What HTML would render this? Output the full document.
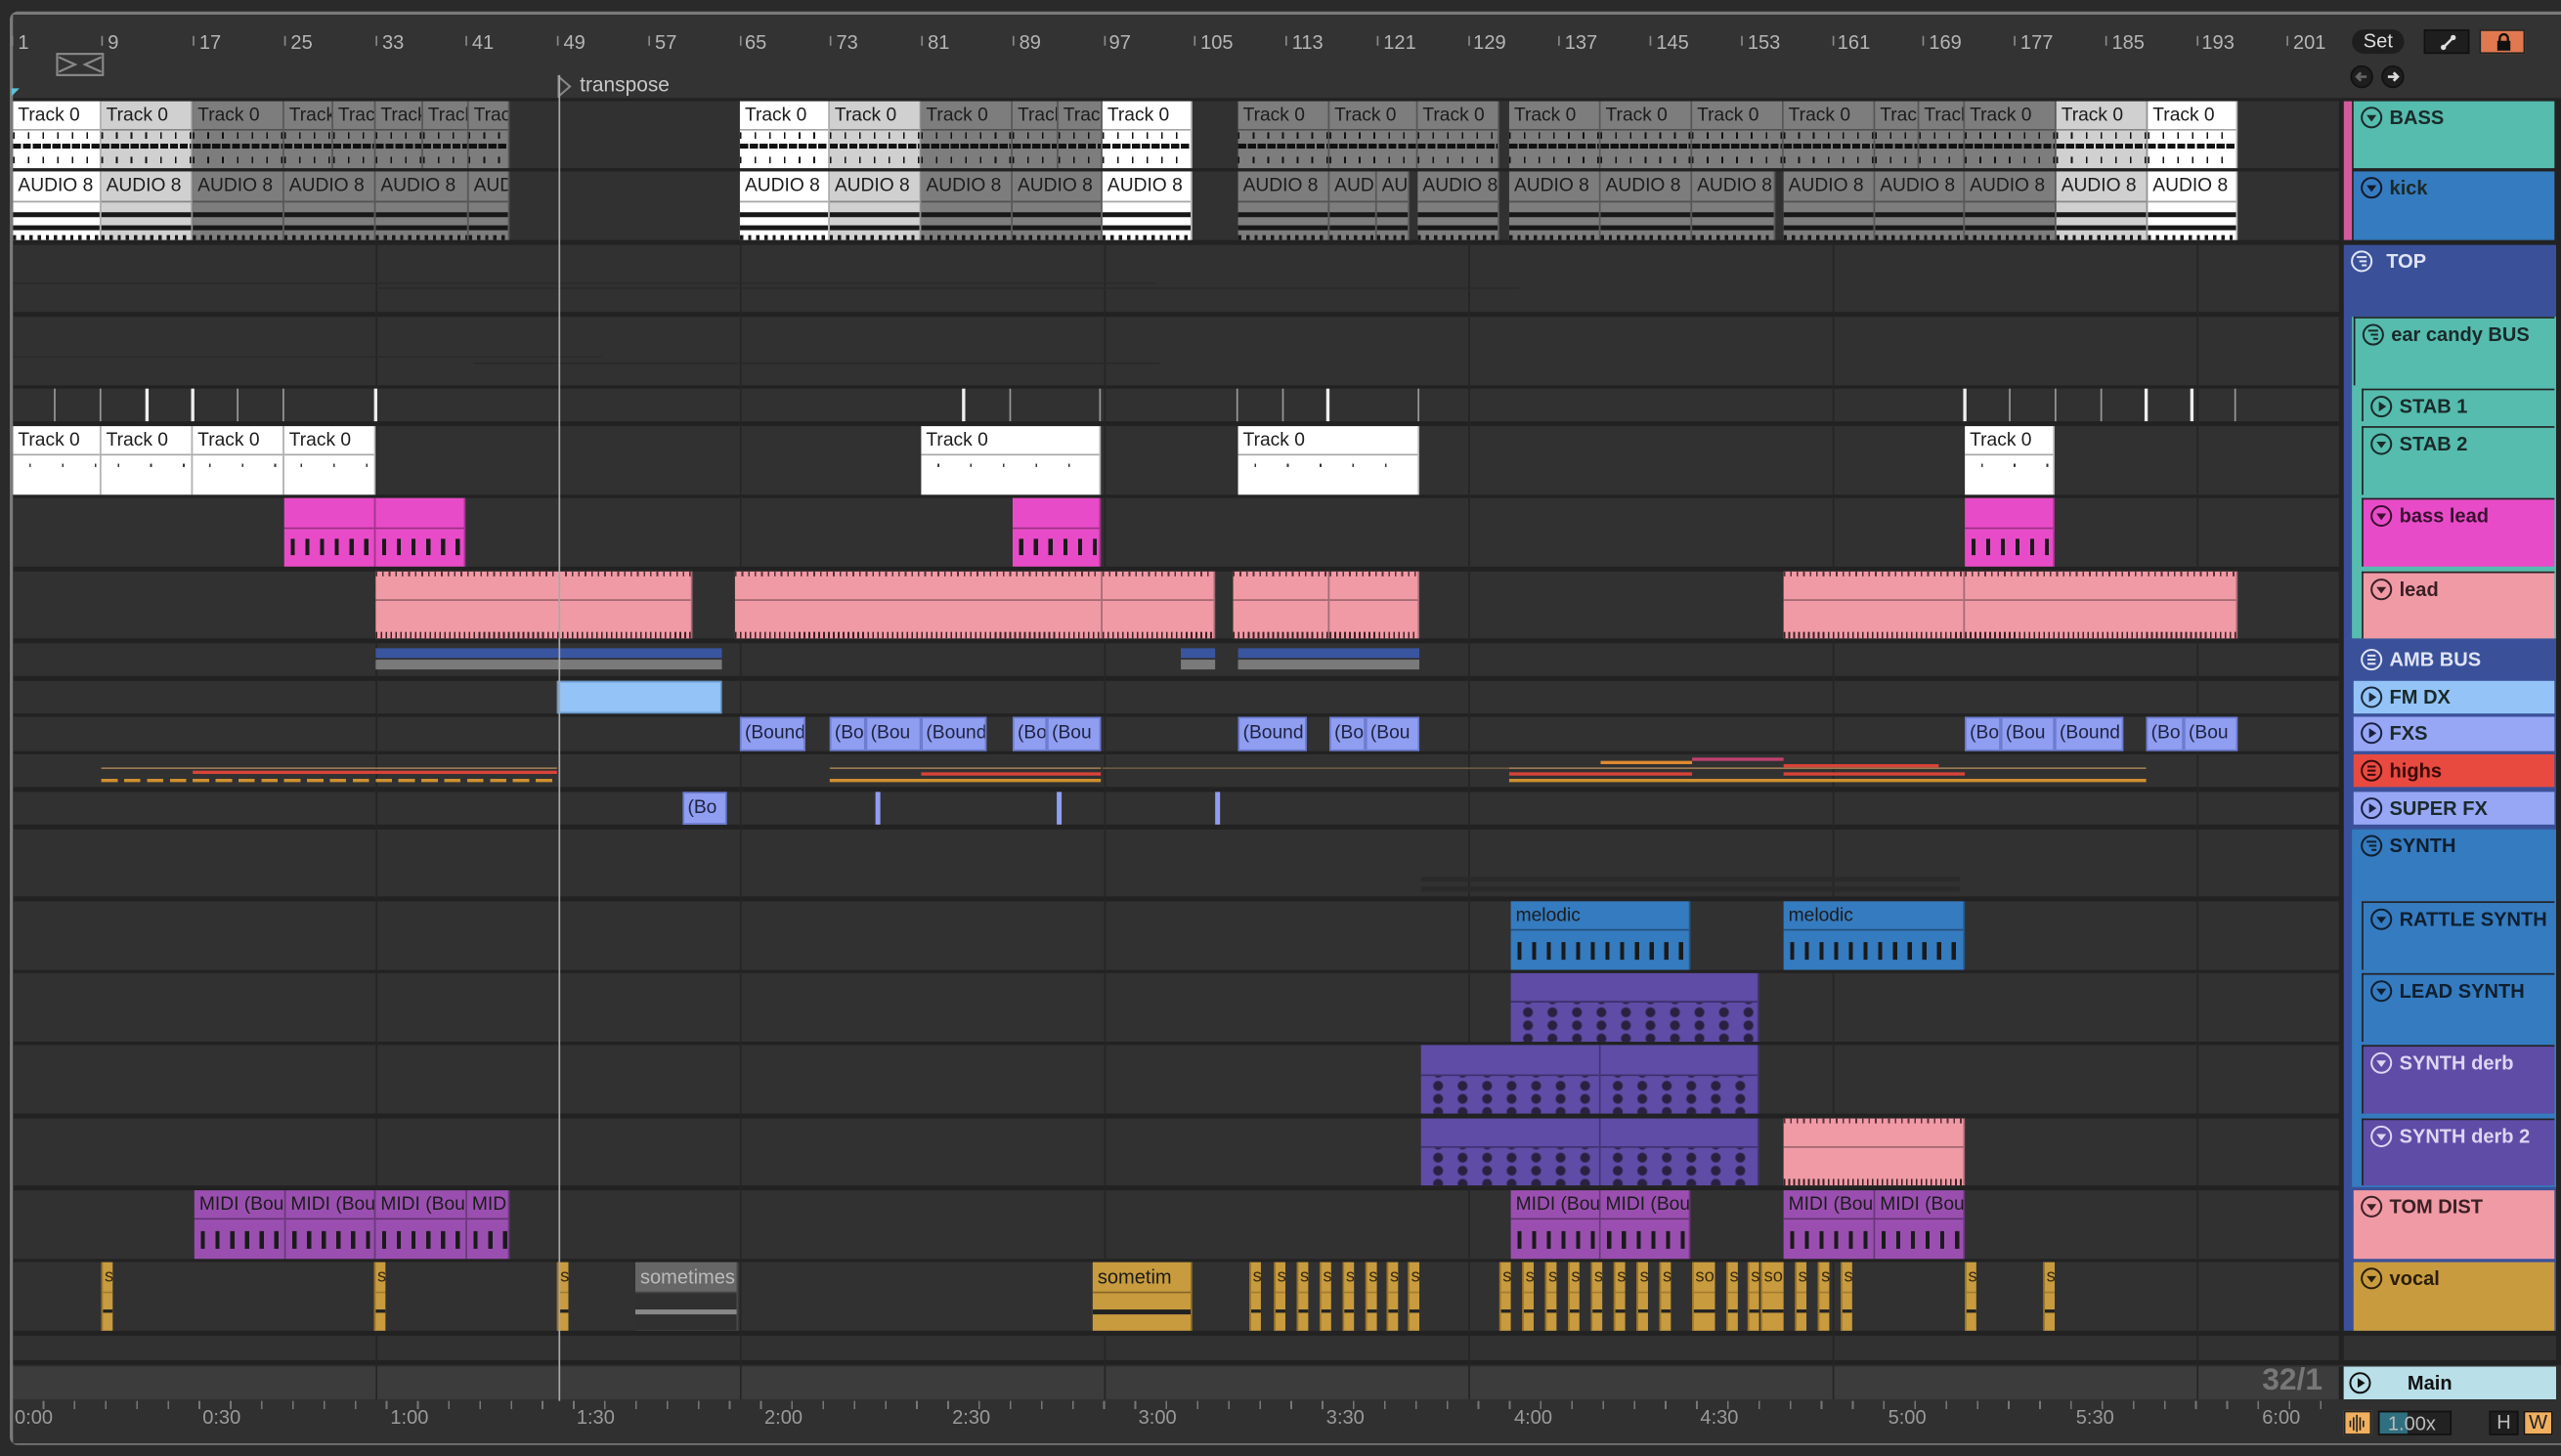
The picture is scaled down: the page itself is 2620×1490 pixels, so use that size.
<!DOCTYPE html>
<html><head><meta charset="utf-8"><style>
*{margin:0;padding:0;box-sizing:border-box}
html,body{width:2620px;height:1490px;overflow:hidden;background:#2a2a2a}
#s{position:absolute;left:0;top:0;width:1568px;height:892px;transform:scale(1.67092);transform-origin:0 0;font-family:"Liberation Sans",sans-serif}
.a{position:absolute}
.ln{position:absolute;left:8px;width:1424px;background:#313131}
.k{position:absolute;top:0;height:100%;overflow:hidden;border-right:1px solid rgba(0,0,0,.3)}
.k b{display:block;height:44%;font-weight:400;font-size:11.5px;line-height:19px;padding-left:3px;white-space:nowrap;border-bottom:1px solid rgba(0,0,0,.35);color:#1c1c1c;overflow:hidden}
.k s{display:block;height:56%;text-decoration:none}
.w{background:#fff}.lg{background:#d0d0d0}.g{background:#7d7d7d}
.dt s{background:repeating-linear-gradient(90deg,#111 0 5px,transparent 5px 6px) 0 40%/100% 3px no-repeat,repeating-linear-gradient(90deg,#111 0 1px,transparent 1px 9px) 0 85%/100% 4px no-repeat,repeating-linear-gradient(90deg,#111 0 1px,transparent 1px 9px) 0 5%/100% 4px no-repeat}
.au s{background:linear-gradient(#181818,#181818) 0 30%/100% 3px no-repeat,linear-gradient(#181818,#181818) 0 70%/100% 3px no-repeat,repeating-linear-gradient(90deg,#181818 0 2px,transparent 2px 5px) 0 100%/100% 3px no-repeat}
.mb s{background:repeating-linear-gradient(90deg,transparent 0 4px,#1a1a1a 4px 6.5px,transparent 6.5px 9px) 0 50%/100% 45% no-repeat}
.pd s{background:radial-gradient(circle,#2a2040 30%,transparent 40%) 3px 2px/15px 8px}
.pk b{background:repeating-linear-gradient(90deg,#5a3038 0 1px,transparent 1px 4px) 0 0/100% 3px no-repeat}
.pk s{background:repeating-linear-gradient(90deg,#3a2024 0 1px,transparent 1px 3px) 0 100%/100% 4px no-repeat}
.sd s{background:repeating-linear-gradient(90deg,#333 0 1px,transparent 1px 20px) 10px 20%/100% 2px no-repeat}
.fx{position:absolute;top:0;height:100%;background:#8f9ef0;border:1px solid #6c7bd0;font-size:11.5px;line-height:19px;padding-left:2px;white-space:nowrap;overflow:hidden;color:#1e2240}
.v{position:absolute;top:0;height:100%;width:7px;background:#c89b3e;border-left:1px solid #9a7428;overflow:hidden}
.v b{display:block;height:44%;font-weight:400;font-size:11px;line-height:19px;color:#3a2a10;padding-left:1px;border-bottom:1px solid rgba(0,0,0,.2)}
.v s{display:block;height:56%;background:linear-gradient(#222,#222) 0 50%/100% 2px no-repeat}
.h{position:absolute;left:1441px;width:123px;font-weight:700;font-size:12px;line-height:20px;color:#1a2a2a;padding-left:22px;white-space:nowrap}
.h svg{position:absolute;left:4px;top:3px}
.n{border-left:1.5px solid #222;border-top:1.5px solid #222}
.gl{position:absolute;top:60px;height:797px;width:1px;background:#252525}
.rn{position:absolute;top:19px;font-size:12px;color:#b5b5b5}
.rt{position:absolute;top:22px;width:1px;height:6px;background:#888}
.tl{position:absolute;top:861px;font-size:12px;color:#9a9a9a}
.hl{position:absolute;height:1px}
</style></head><body><div id="s">
<div class="a" style="left:6px;top:7px;width:1570px;height:878px;border:2px solid #7a7a7a;border-radius:5px;background:#303030"></div>
<div class="a" style="left:8px;top:9px;width:1427px;height:51px;background:#333"></div>
<div class="a" style="left:1435px;top:9px;width:133px;height:51px;background:#333"></div>
<div class="a" style="left:8px;top:60px;width:1560px;height:776px;background:#222"></div>
<div class="ln" style="top:62.2px;height:40.7px"></div>
<div class="ln" style="top:105.3px;height:41.9px"></div>
<div class="ln" style="top:149.6px;height:41.9px"></div>
<div class="ln" style="top:193.9px;height:41.9px"></div>
<div class="ln" style="top:238.2px;height:20.3px"></div>
<div class="ln" style="top:260.9px;height:41.9px"></div>
<div class="ln" style="top:305.2px;height:41.9px"></div>
<div class="ln" style="top:349.5px;height:41.9px"></div>
<div class="ln" style="top:393.8px;height:20.3px"></div>
<div class="ln" style="top:416.5px;height:20.3px"></div>
<div class="ln" style="top:439.3px;height:20.3px"></div>
<div class="ln" style="top:462px;height:20.3px"></div>
<div class="ln" style="top:484.7px;height:20.3px"></div>
<div class="ln" style="top:507.5px;height:41.9px"></div>
<div class="ln" style="top:551.8px;height:41.9px"></div>
<div class="ln" style="top:596px;height:41.9px"></div>
<div class="ln" style="top:640.3px;height:41.9px"></div>
<div class="ln" style="top:684.6px;height:41.9px"></div>
<div class="ln" style="top:728.9px;height:41.9px"></div>
<div class="ln" style="top:773.2px;height:41.9px"></div>
<div class="ln" style="top:817.5px;height:15.6px"></div>
<div class="a" style="left:8px;top:836.6px;width:1424px;height:20.3px;background:#3c3c3c"></div>
<div class="a" style="left:1432px;top:836.6px;width:3px;height:20.3px;background:#222"></div>
<div class="a" style="left:1385px;top:835px;font-size:19px;font-weight:700;color:#777">32/1</div>
<div class="a" style="left:8px;top:857px;width:1560px;height:27px;background:#303030"></div>
<div class="gl" style="left:229.6px"></div><div class="gl" style="left:452.6px"></div><div class="gl" style="left:675.6px"></div><div class="gl" style="left:898.6px"></div><div class="gl" style="left:1121.6px"></div><div class="gl" style="left:1344.6px"></div>
<div class="hl" style="left:8px;top:173px;width:700px;background:#2a2a2a"></div>
<div class="hl" style="left:230px;top:176px;width:700px;background:#2a2a2a"></div>
<div class="hl" style="left:8px;top:218px;width:360px;background:#2a2a2a"></div>
<div class="hl" style="left:290px;top:222px;width:420px;background:#2a2a2a"></div>
<div class="hl" style="left:870px;top:537px;width:330px;height:3px;background:#2a2a2a"></div>
<div class="hl" style="left:870px;top:543px;width:330px;height:3px;background:#2a2a2a"></div>
<div class="rt" style="left:7px"></div><div class="rn" style="left:11px">1</div>
<div class="rt" style="left:62.4px"></div><div class="rn" style="left:66px">9</div>
<div class="rt" style="left:118.1px"></div><div class="rn" style="left:122px">17</div>
<div class="rt" style="left:173.9px"></div><div class="rn" style="left:178px">25</div>
<div class="rt" style="left:229.6px"></div><div class="rn" style="left:234px">33</div>
<div class="rt" style="left:285.4px"></div><div class="rn" style="left:289px">41</div>
<div class="rt" style="left:341.1px"></div><div class="rn" style="left:345px">49</div>
<div class="rt" style="left:396.9px"></div><div class="rn" style="left:401px">57</div>
<div class="rt" style="left:452.6px"></div><div class="rn" style="left:456px">65</div>
<div class="rt" style="left:508.4px"></div><div class="rn" style="left:512px">73</div>
<div class="rt" style="left:564.1px"></div><div class="rn" style="left:568px">81</div>
<div class="rt" style="left:619.9px"></div><div class="rn" style="left:624px">89</div>
<div class="rt" style="left:675.6px"></div><div class="rn" style="left:679px">97</div>
<div class="rt" style="left:731.4px"></div><div class="rn" style="left:735px">105</div>
<div class="rt" style="left:787.1px"></div><div class="rn" style="left:791px">113</div>
<div class="rt" style="left:842.9px"></div><div class="rn" style="left:847px">121</div>
<div class="rt" style="left:898.6px"></div><div class="rn" style="left:902px">129</div>
<div class="rt" style="left:954.4px"></div><div class="rn" style="left:958px">137</div>
<div class="rt" style="left:1010.1px"></div><div class="rn" style="left:1014px">145</div>
<div class="rt" style="left:1065.9px"></div><div class="rn" style="left:1070px">153</div>
<div class="rt" style="left:1121.6px"></div><div class="rn" style="left:1125px">161</div>
<div class="rt" style="left:1177.4px"></div><div class="rn" style="left:1181px">169</div>
<div class="rt" style="left:1233.1px"></div><div class="rn" style="left:1237px">177</div>
<div class="rt" style="left:1288.9px"></div><div class="rn" style="left:1293px">185</div>
<div class="rt" style="left:1344.6px"></div><div class="rn" style="left:1348px">193</div>
<div class="rt" style="left:1400.4px"></div><div class="rn" style="left:1404px">201</div>
<svg class="a" style="left:34px;top:32px" width="30" height="15"><rect x="1" y="1" width="28" height="13" fill="none" stroke="#888" stroke-width="1.3"/><path d="M2 3 L12 7.5 L2 12 M28 3 L18 7.5 L28 12" fill="none" stroke="#888" stroke-width="1.3"/></svg>
<svg class="a" style="left:7px;top:54px" width="6" height="6"><path d="M0 0H5L0 5Z" fill="#5ac4d8"/></svg>
<svg class="a" style="left:341px;top:46px" width="10" height="14"><path d="M1 1 L8 7 L1 13Z" fill="none" stroke="#888" stroke-width="1.2"/></svg>
<div class="a" style="left:355px;top:45px;font-size:12.5px;color:#c8c8c8">transpose</div>
<div class="a" style="left:0;top:62.2px;height:40.7px;width:1432px">
<div class="k dt w" style="left:8px;width:54px"><b>Track 0</b><s></s></div>
<div class="k dt lg" style="left:62px;width:56px"><b>Track 0</b><s></s></div>
<div class="k dt g" style="left:118px;width:56px"><b>Track 0</b><s></s></div>
<div class="k dt g" style="left:174px;width:30px"><b>Track 0</b><s></s></div>
<div class="k dt g" style="left:204px;width:26px"><b>Track 0</b><s></s></div>
<div class="k dt g" style="left:230px;width:29px"><b>Track 0</b><s></s></div>
<div class="k dt g" style="left:259px;width:28px"><b>Track 0</b><s></s></div>
<div class="k dt g" style="left:287px;width:25px"><b>Track 0</b><s></s></div>
<div class="k dt w" style="left:453px;width:55px"><b>Track 0</b><s></s></div>
<div class="k dt lg" style="left:508px;width:56px"><b>Track 0</b><s></s></div>
<div class="k dt g" style="left:564px;width:56px"><b>Track 0</b><s></s></div>
<div class="k dt g" style="left:620px;width:28px"><b>Track 0</b><s></s></div>
<div class="k dt g" style="left:648px;width:27px"><b>Track 0</b><s></s></div>
<div class="k dt w" style="left:675px;width:55px"><b>Track 0</b><s></s></div>
<div class="k dt g" style="left:758px;width:56px"><b>Track 0</b><s></s></div>
<div class="k dt g" style="left:814px;width:54px"><b>Track 0</b><s></s></div>
<div class="k dt g" style="left:868px;width:50px"><b>Track 0</b><s></s></div>
<div class="k dt g" style="left:924px;width:56px"><b>Track 0</b><s></s></div>
<div class="k dt g" style="left:980px;width:56px"><b>Track 0</b><s></s></div>
<div class="k dt g" style="left:1036px;width:56px"><b>Track 0</b><s></s></div>
<div class="k dt g" style="left:1092px;width:56px"><b>Track 0</b><s></s></div>
<div class="k dt g" style="left:1148px;width:27px"><b>Track 0</b><s></s></div>
<div class="k dt g" style="left:1175px;width:28px"><b>Track 0</b><s></s></div>
<div class="k dt g" style="left:1203px;width:56px"><b>Track 0</b><s></s></div>
<div class="k dt lg" style="left:1259px;width:56px"><b>Track 0</b><s></s></div>
<div class="k dt w" style="left:1315px;width:55px"><b>Track 0</b><s></s></div>
</div>
<div class="a" style="left:0;top:105.3px;height:41.9px;width:1432px">
<div class="k au w" style="left:8px;width:54px"><b>AUDIO 8</b><s></s></div>
<div class="k au lg" style="left:62px;width:56px"><b>AUDIO 8</b><s></s></div>
<div class="k au g" style="left:118px;width:56px"><b>AUDIO 8</b><s></s></div>
<div class="k au g" style="left:174px;width:56px"><b>AUDIO 8</b><s></s></div>
<div class="k au g" style="left:230px;width:57px"><b>AUDIO 8</b><s></s></div>
<div class="k au g" style="left:287px;width:25px"><b>AUDIO 8</b><s></s></div>
<div class="k au w" style="left:453px;width:55px"><b>AUDIO 8</b><s></s></div>
<div class="k au lg" style="left:508px;width:56px"><b>AUDIO 8</b><s></s></div>
<div class="k au g" style="left:564px;width:56px"><b>AUDIO 8</b><s></s></div>
<div class="k au g" style="left:620px;width:55px"><b>AUDIO 8</b><s></s></div>
<div class="k au w" style="left:675px;width:55px"><b>AUDIO 8</b><s></s></div>
<div class="k au g" style="left:758px;width:56px"><b>AUDIO 8</b><s></s></div>
<div class="k au g" style="left:814px;width:29px"><b>AUDIO 8</b><s></s></div>
<div class="k au g" style="left:843px;width:20px"><b>AUDIO 8</b><s></s></div>
<div class="k au g" style="left:868px;width:50px"><b>AUDIO 8</b><s></s></div>
<div class="k au g" style="left:924px;width:56px"><b>AUDIO 8</b><s></s></div>
<div class="k au g" style="left:980px;width:56px"><b>AUDIO 8</b><s></s></div>
<div class="k au g" style="left:1036px;width:51px"><b>AUDIO 8</b><s></s></div>
<div class="k au g" style="left:1092px;width:56px"><b>AUDIO 8</b><s></s></div>
<div class="k au g" style="left:1148px;width:55px"><b>AUDIO 8</b><s></s></div>
<div class="k au g" style="left:1203px;width:56px"><b>AUDIO 8</b><s></s></div>
<div class="k au lg" style="left:1259px;width:56px"><b>AUDIO 8</b><s></s></div>
<div class="k au w" style="left:1315px;width:55px"><b>AUDIO 8</b><s></s></div>
</div>
<div class="a" style="left:0;top:238.2px;height:20.3px;width:1432px">
<div class="a" style="left:33px;top:0;width:1px;height:100%;background:#999"></div>
<div class="a" style="left:61px;top:0;width:1px;height:100%;background:#999"></div>
<div class="a" style="left:89px;top:0;width:2px;height:100%;background:#eee"></div>
<div class="a" style="left:117px;top:0;width:2px;height:100%;background:#eee"></div>
<div class="a" style="left:145px;top:0;width:1px;height:100%;background:#999"></div>
<div class="a" style="left:173px;top:0;width:1px;height:100%;background:#999"></div>
<div class="a" style="left:229px;top:0;width:2px;height:100%;background:#eee"></div>
<div class="a" style="left:589px;top:0;width:2px;height:100%;background:#eee"></div>
<div class="a" style="left:618px;top:0;width:1px;height:100%;background:#999"></div>
<div class="a" style="left:673px;top:0;width:1px;height:100%;background:#999"></div>
<div class="a" style="left:757px;top:0;width:1px;height:100%;background:#999"></div>
<div class="a" style="left:785px;top:0;width:1px;height:100%;background:#999"></div>
<div class="a" style="left:812px;top:0;width:2px;height:100%;background:#eee"></div>
<div class="a" style="left:868px;top:0;width:1px;height:100%;background:#999"></div>
<div class="a" style="left:1202px;top:0;width:2px;height:100%;background:#eee"></div>
<div class="a" style="left:1230px;top:0;width:1px;height:100%;background:#999"></div>
<div class="a" style="left:1258px;top:0;width:1px;height:100%;background:#999"></div>
<div class="a" style="left:1286px;top:0;width:1px;height:100%;background:#999"></div>
<div class="a" style="left:1313px;top:0;width:2px;height:100%;background:#eee"></div>
<div class="a" style="left:1341px;top:0;width:2px;height:100%;background:#eee"></div>
<div class="a" style="left:1368px;top:0;width:1px;height:100%;background:#999"></div>
</div>
<div class="a" style="left:0;top:260.9px;height:41.9px;width:1432px">
<div class="k sd w" style="left:8px;width:54px"><b>Track 0</b><s></s></div>
<div class="k sd w" style="left:62px;width:56px"><b>Track 0</b><s></s></div>
<div class="k sd w" style="left:118px;width:56px"><b>Track 0</b><s></s></div>
<div class="k sd w" style="left:174px;width:56px"><b>Track 0</b><s></s></div>
<div class="k sd w" style="left:564px;width:110px"><b>Track 0</b><s></s></div>
<div class="k sd w" style="left:758px;width:111px"><b>Track 0</b><s></s></div>
<div class="k sd w" style="left:1203px;width:55px"><b>Track 0</b><s></s></div>
</div>
<div class="a" style="left:0;top:305.2px;height:41.9px;width:1432px">
<div class="k mb" style="left:174px;width:56px;background:#e84bc8"><b></b><s></s></div>
<div class="k mb" style="left:230px;width:55px;background:#e84bc8"><b></b><s></s></div>
<div class="k mb" style="left:620px;width:54px;background:#e84bc8"><b></b><s></s></div>
<div class="k mb" style="left:1203px;width:55px;background:#e84bc8"><b></b><s></s></div>
</div>
<div class="a" style="left:0;top:349.5px;height:41.9px;width:1432px">
<div class="k pk" style="left:230px;width:194px;background:#f09aa6"><b></b><s></s></div>
<div class="k pk" style="left:450px;width:225px;background:#f09aa6"><b></b><s></s></div>
<div class="k pk" style="left:675px;width:69px;background:#f09aa6"><b></b><s></s></div>
<div class="k pk" style="left:755px;width:59px;background:#f09aa6"><b></b><s></s></div>
<div class="k pk" style="left:814px;width:55px;background:#f09aa6"><b></b><s></s></div>
<div class="k pk" style="left:1092px;width:111px;background:#f09aa6"><b></b><s></s></div>
<div class="k pk" style="left:1203px;width:167px;background:#f09aa6"><b></b><s></s></div>
</div>
<div class="a" style="left:0;top:393.8px;height:20.3px;width:1432px">
<div class="a" style="left:230px;top:3px;width:212px;height:6px;background:#3a55a0"></div><div class="a" style="left:230px;top:10px;width:212px;height:6px;background:#7a7a7a"></div>
<div class="a" style="left:723px;top:3px;width:21px;height:6px;background:#3a55a0"></div><div class="a" style="left:723px;top:10px;width:21px;height:6px;background:#7a7a7a"></div>
<div class="a" style="left:758px;top:3px;width:111px;height:6px;background:#3a55a0"></div><div class="a" style="left:758px;top:10px;width:111px;height:6px;background:#7a7a7a"></div>
</div>
<div class="a" style="left:341px;top:416.5px;height:20.3px;width:101px;background:#94c4f7;border:1px solid #6a9ad0"></div>
<div class="a" style="left:0;top:439.3px;height:20.3px;width:1432px">
<div class="fx" style="left:453px;width:40px">(Bound</div>
<div class="fx" style="left:508px;width:22px">(Bo</div>
<div class="fx" style="left:530px;width:34px">(Bou</div>
<div class="fx" style="left:564px;width:40px">(Bound</div>
<div class="fx" style="left:620px;width:21px">(Bo</div>
<div class="fx" style="left:641px;width:33px">(Bou</div>
<div class="fx" style="left:758px;width:42px">(Bound</div>
<div class="fx" style="left:814px;width:22px">(Bo</div>
<div class="fx" style="left:836px;width:33px">(Bou</div>
<div class="fx" style="left:1203px;width:22px">(Bo</div>
<div class="fx" style="left:1225px;width:33px">(Bou</div>
<div class="fx" style="left:1258px;width:42px">(Bound</div>
<div class="fx" style="left:1314px;width:23px">(Bo</div>
<div class="fx" style="left:1337px;width:33px">(Bou</div>
</div>
<div class="a" style="left:0;top:462px;height:20.3px;width:1432px">
<div class="hl" style="left:62px;top:8px;width:279px;background:#9a7a50"></div>
<div class="hl" style="left:118px;top:10px;width:223px;height:2px;background:#d84438"></div>
<div class="hl" style="left:62px;top:15px;width:279px;height:1.5px;background:repeating-linear-gradient(90deg,#d09030 0 10px,transparent 10px 14px)"></div>
<div class="hl" style="left:508px;top:8px;width:166px;background:#9a7a50"></div>
<div class="hl" style="left:564px;top:11px;width:110px;height:2px;background:#d84438"></div>
<div class="hl" style="left:508px;top:15px;width:166px;height:1.5px;background:#d09030"></div>
<div class="hl" style="left:675px;top:8px;width:250px;background:#6a5a40"></div>
<div class="hl" style="left:924px;top:8px;width:390px;background:#9a7a50"></div>
<div class="hl" style="left:980px;top:4px;width:56px;height:2px;background:#e08a30"></div>
<div class="hl" style="left:1036px;top:2px;width:56px;height:1.5px;background:#c04070"></div>
<div class="hl" style="left:924px;top:11px;width:112px;height:2px;background:#d84438"></div>
<div class="hl" style="left:1092px;top:6px;width:95px;height:2px;background:#d84438"></div>
<div class="hl" style="left:1092px;top:11px;width:111px;height:2px;background:#d84438"></div>
<div class="hl" style="left:924px;top:15px;width:390px;height:1.5px;background:#d09030"></div>
</div>
<div class="a" style="left:0;top:484.7px;height:20.3px;width:1432px">
<div class="fx" style="left:418px;width:27px">(Bo</div>
<div class="a" style="left:536px;top:0;width:3px;height:100%;background:#8f9ef0"></div>
<div class="a" style="left:647px;top:0;width:3px;height:100%;background:#8f9ef0"></div>
<div class="a" style="left:744px;top:0;width:3px;height:100%;background:#8f9ef0"></div>
</div>
<div class="a" style="left:0;top:551.8px;height:41.9px;width:1432px">
<div class="k mb" style="left:925px;width:110px;background:#357bbf"><b>melodic</b><s></s></div>
<div class="k mb" style="left:1092px;width:111px;background:#357bbf"><b>melodic</b><s></s></div>
</div>
<div class="a" style="left:0;top:596px;height:41.9px;width:1432px">
<div class="k pd" style="left:925px;width:152px;background:#5e4ca6"><b></b><s></s></div>
</div>
<div class="a" style="left:0;top:640.3px;height:41.9px;width:1432px">
<div class="k pd" style="left:870px;width:110px;background:#5e4ca6"><b></b><s></s></div>
<div class="k pd" style="left:980px;width:97px;background:#5e4ca6"><b></b><s></s></div>
</div>
<div class="a" style="left:0;top:684.6px;height:41.9px;width:1432px">
<div class="k pd" style="left:870px;width:110px;background:#5e4ca6"><b></b><s></s></div>
<div class="k pd" style="left:980px;width:97px;background:#5e4ca6"><b></b><s></s></div>
<div class="k pk" style="left:1092px;width:111px;background:#f09aa6"><b></b><s></s></div>
</div>
<div class="a" style="left:0;top:728.9px;height:41.9px;width:1432px">
<div class="k mb" style="left:119px;width:56px;background:#9a4fb0"><b>MIDI (Bou</b><s></s></div>
<div class="k mb" style="left:175px;width:55px;background:#9a4fb0"><b>MIDI (Bou</b><s></s></div>
<div class="k mb" style="left:230px;width:56px;background:#9a4fb0"><b>MIDI (Bou</b><s></s></div>
<div class="k mb" style="left:286px;width:26px;background:#9a4fb0"><b>MIDI</b><s></s></div>
<div class="k mb" style="left:925px;width:55px;background:#9a4fb0"><b>MIDI (Bou</b><s></s></div>
<div class="k mb" style="left:980px;width:55px;background:#9a4fb0"><b>MIDI (Bou</b><s></s></div>
<div class="k mb" style="left:1092px;width:56px;background:#9a4fb0"><b>MIDI (Bou</b><s></s></div>
<div class="k mb" style="left:1148px;width:55px;background:#9a4fb0"><b>MIDI (Bou</b><s></s></div>
</div>
<div class="a" style="left:0;top:773.2px;height:41.9px;width:1432px">
<div class="v" style="left:62px"><b>s</b><s></s></div>
<div class="v" style="left:229px"><b>s</b><s></s></div>
<div class="v" style="left:341px"><b>s</b><s></s></div>
<div class="k" style="left:389px;width:63px;background:#666"><b style="color:#bbb;font-size:12px">sometimes</b><s style="background:#303030 linear-gradient(#888,#888) 0 50%/100% 3px no-repeat"></s></div>
<div class="k" style="left:669px;width:61px;background:#c89b3e"><b style="font-size:12px">sometim</b><s style="background:linear-gradient(#222,#222) 0 50%/100% 3px no-repeat"></s></div>
<div class="v" style="left:765px"><b>s</b><s></s></div>
<div class="v" style="left:780px"><b>s</b><s></s></div>
<div class="v" style="left:794px"><b>s</b><s></s></div>
<div class="v" style="left:808px"><b>s</b><s></s></div>
<div class="v" style="left:822px"><b>s</b><s></s></div>
<div class="v" style="left:836px"><b>s</b><s></s></div>
<div class="v" style="left:849px"><b>s</b><s></s></div>
<div class="v" style="left:862px"><b>s</b><s></s></div>
<div class="v" style="left:918px"><b>s</b><s></s></div>
<div class="v" style="left:932px"><b>s</b><s></s></div>
<div class="v" style="left:946px"><b>s</b><s></s></div>
<div class="v" style="left:960px"><b>s</b><s></s></div>
<div class="v" style="left:974px"><b>s</b><s></s></div>
<div class="v" style="left:988px"><b>s</b><s></s></div>
<div class="v" style="left:1002px"><b>s</b><s></s></div>
<div class="v" style="left:1016px"><b>s</b><s></s></div>
<div class="v" style="left:1036px;width:14px"><b>so</b><s></s></div>
<div class="v" style="left:1057px"><b>s</b><s></s></div>
<div class="v" style="left:1070px"><b>s</b><s></s></div>
<div class="v" style="left:1078px;width:14px"><b>so</b><s></s></div>
<div class="v" style="left:1099px"><b>s</b><s></s></div>
<div class="v" style="left:1113px"><b>s</b><s></s></div>
<div class="v" style="left:1127px"><b>s</b><s></s></div>
<div class="v" style="left:1203px"><b>s</b><s></s></div>
<div class="v" style="left:1251px"><b>s</b><s></s></div>
</div>
<div class="a" style="left:341.5px;top:46px;width:1px;height:812px;background:#a8a8a8"></div>
<div class="a" style="left:8px;top:858px;width:1427px;height:5px;background:repeating-linear-gradient(90deg,transparent 0 18.1px,#777 18.1px 19.1px)"></div>
<div class="tl" style="left:9px">0:00</div><div class="tl" style="left:124px">0:30</div><div class="tl" style="left:239px">1:00</div><div class="tl" style="left:353px">1:30</div><div class="tl" style="left:468px">2:00</div><div class="tl" style="left:583px">2:30</div><div class="tl" style="left:697px">3:00</div><div class="tl" style="left:812px">3:30</div><div class="tl" style="left:927px">4:00</div><div class="tl" style="left:1041px">4:30</div><div class="tl" style="left:1156px">5:00</div><div class="tl" style="left:1271px">5:30</div><div class="tl" style="left:1385px">6:00</div>
<div class="a" style="left:1440px;top:18px;width:32px;height:15px;border-radius:8px;background:#1e1e1e;color:#ddd;font-size:12px;line-height:15px;text-align:center">Set</div>
<div class="a" style="left:1484px;top:18px;width:28px;height:15px;background:#1e1e1e;border:1px solid #111"><svg width="28" height="14"><path d="M11 10 L17 4" stroke="#ddd" stroke-width="1.5"/><circle cx="11" cy="10" r="1.6" fill="#ddd"/><circle cx="17" cy="4" r="1.6" fill="#ddd"/></svg></div>
<div class="a" style="left:1518px;top:18px;width:28px;height:15px;background:#e07850;border:1px solid #222"><svg width="28" height="14"><rect x="10" y="6" width="8" height="6" fill="#111"/><path d="M11.5 6.5 V4.5 a2.5 2.5 0 0 1 5 0 V6.5" fill="none" stroke="#111" stroke-width="1.4"/></svg></div>
<svg class="a" style="left:1438px;top:39px" width="34" height="16"><circle cx="8" cy="8" r="6.5" fill="#1e1e1e" stroke="#111"/><path d="M11 8H5M7.5 5.5L5 8L7.5 10.5" stroke="#666" stroke-width="1.6" fill="none"/><circle cx="27" cy="8" r="6.5" fill="#1e1e1e" stroke="#111"/><path d="M24 8H30M27.5 5.5L30 8L27.5 10.5" stroke="#ddd" stroke-width="1.6" fill="none"/></svg>
<div class="a" style="left:1435px;top:62.2px;width:5px;height:85px;background:#d45a9a"></div>
<div class="a" style="left:1435px;top:149.6px;width:130px;height:665.5px;background:#3a519a"></div>
<div class="a" style="left:1440px;top:193.9px;width:125px;height:197.5px;background:#55bcae"></div>
<div class="a" style="left:1440px;top:507.5px;width:125px;height:219px;background:#357bbf"></div>
<div class="a" style="left:1435px;top:836.6px;width:130px;height:20.3px;background:#b9dfe9"></div>
<div class="h" style="top:62.2px;height:40.7px;background:#55bcae"><svg width="14" height="14"><circle cx="7" cy="7" r="6" fill="none" stroke="#1a2a2a" stroke-width="1.2"/><path d="M4 5.5H10L7 9.5Z" fill="#1a2a2a"/></svg>BASS</div>
<div class="h" style="top:105.3px;height:41.9px;background:#357bbf"><svg width="14" height="14"><circle cx="7" cy="7" r="6" fill="none" stroke="#111a2a" stroke-width="1.2"/><path d="M4 5.5H10L7 9.5Z" fill="#111a2a"/></svg>kick</div>
<div class="h" style="left:1435px;width:130px;top:149.6px;height:41.9px;color:#dfe3f5;padding-left:26px"><svg width="14" height="14" style="left:4px"><circle cx="7" cy="7" r="6" fill="none" stroke="#dfe3f5" stroke-width="1.2"/><path d="M4 4.5H10M5.5 7H10M7 9.5H10" stroke="#dfe3f5" stroke-width="1.2"/></svg>TOP</div>
<div class="h n" style="top:193.9px;height:41.9px;background:#55bcae"><svg width="14" height="14"><circle cx="7" cy="7" r="6" fill="none" stroke="#1a2a2a" stroke-width="1.2"/><path d="M4 4.5H10M5.5 7H10M7 9.5H10" stroke="#1a2a2a" stroke-width="1.2"/></svg>ear candy BUS</div>
<div class="h n" style="left:1446px;width:118px;top:238.2px;height:20.3px;background:#55bcae"><svg width="14" height="14"><circle cx="7" cy="7" r="6" fill="none" stroke="#1a2a2a" stroke-width="1.2"/><path d="M5.5 4V10L10 7Z" fill="#1a2a2a"/></svg>STAB 1</div>
<div class="h n" style="left:1446px;width:118px;top:260.9px;height:41.9px;background:#55bcae"><svg width="14" height="14"><circle cx="7" cy="7" r="6" fill="none" stroke="#1a2a2a" stroke-width="1.2"/><path d="M4 5.5H10L7 9.5Z" fill="#1a2a2a"/></svg>STAB 2</div>
<div class="h n" style="left:1446px;width:118px;top:305.2px;height:41.9px;background:#e84bc8;color:#3a1030"><svg width="14" height="14"><circle cx="7" cy="7" r="6" fill="none" stroke="#3a1030" stroke-width="1.2"/><path d="M4 5.5H10L7 9.5Z" fill="#3a1030"/></svg>bass lead</div>
<div class="h n" style="left:1446px;width:118px;top:349.5px;height:41.9px;background:#f09aa6;color:#3a2024"><svg width="14" height="14"><circle cx="7" cy="7" r="6" fill="none" stroke="#3a2024" stroke-width="1.2"/><path d="M4 5.5H10L7 9.5Z" fill="#3a2024"/></svg>lead</div>
<div class="h" style="top:393.8px;height:20.3px;background:#3a519a;color:#dfe3f5"><svg width="14" height="14"><circle cx="7" cy="7" r="6" fill="none" stroke="#dfe3f5" stroke-width="1.2"/><path d="M4.5 4.5H9.5M4.5 7H9.5M4.5 9.5H9.5" stroke="#dfe3f5" stroke-width="1.2"/></svg>AMB BUS</div>
<div class="h" style="top:416.5px;height:20.3px;background:#94c4f7"><svg width="14" height="14"><circle cx="7" cy="7" r="6" fill="none" stroke="#1a2a3a" stroke-width="1.2"/><path d="M5.5 4V10L10 7Z" fill="#1a2a3a"/></svg>FM DX</div>
<div class="h" style="top:439.3px;height:20.3px;background:#97a6f5"><svg width="14" height="14"><circle cx="7" cy="7" r="6" fill="none" stroke="#1a2040" stroke-width="1.2"/><path d="M5.5 4V10L10 7Z" fill="#1a2040"/></svg>FXS</div>
<div class="h" style="top:462px;height:20.3px;background:#e84a40;color:#3a0a08"><svg width="14" height="14"><circle cx="7" cy="7" r="6" fill="none" stroke="#3a0a08" stroke-width="1.2"/><path d="M4.5 4.5H9.5M4.5 7H9.5M4.5 9.5H9.5" stroke="#3a0a08" stroke-width="1.2"/></svg>highs</div>
<div class="h" style="top:484.7px;height:20.3px;background:#97a6f5"><svg width="14" height="14"><circle cx="7" cy="7" r="6" fill="none" stroke="#1a2040" stroke-width="1.2"/><path d="M5.5 4V10L10 7Z" fill="#1a2040"/></svg>SUPER FX</div>
<div class="h" style="top:507.5px;height:41.9px;background:#357bbf;color:#0f1f30"><svg width="14" height="14"><circle cx="7" cy="7" r="6" fill="none" stroke="#0f1f30" stroke-width="1.2"/><path d="M4 4.5H10M5.5 7H10M7 9.5H10" stroke="#0f1f30" stroke-width="1.2"/></svg>SYNTH</div>
<div class="h n" style="left:1446px;width:118px;top:551.8px;height:41.9px;background:#357bbf;color:#0f1f30"><svg width="14" height="14"><circle cx="7" cy="7" r="6" fill="none" stroke="#0f1f30" stroke-width="1.2"/><path d="M4 5.5H10L7 9.5Z" fill="#0f1f30"/></svg>RATTLE SYNTH</div>
<div class="h n" style="left:1446px;width:118px;top:596px;height:41.9px;background:#357bbf;color:#0f1f30"><svg width="14" height="14"><circle cx="7" cy="7" r="6" fill="none" stroke="#0f1f30" stroke-width="1.2"/><path d="M4 5.5H10L7 9.5Z" fill="#0f1f30"/></svg>LEAD SYNTH</div>
<div class="h n" style="left:1446px;width:118px;top:640.3px;height:41.9px;background:#5e4ca6;color:#dcd6f2"><svg width="14" height="14"><circle cx="7" cy="7" r="6" fill="none" stroke="#dcd6f2" stroke-width="1.2"/><path d="M4 5.5H10L7 9.5Z" fill="#dcd6f2"/></svg>SYNTH derb</div>
<div class="h n" style="left:1446px;width:118px;top:684.6px;height:41.9px;background:#5e4ca6;color:#dcd6f2"><svg width="14" height="14"><circle cx="7" cy="7" r="6" fill="none" stroke="#dcd6f2" stroke-width="1.2"/><path d="M4 5.5H10L7 9.5Z" fill="#dcd6f2"/></svg>SYNTH derb 2</div>
<div class="h" style="top:728.9px;height:41.9px;background:#f09aa6;color:#3a2024"><svg width="14" height="14"><circle cx="7" cy="7" r="6" fill="none" stroke="#3a2024" stroke-width="1.2"/><path d="M4 5.5H10L7 9.5Z" fill="#3a2024"/></svg>TOM DIST</div>
<div class="h" style="top:773.2px;height:41.9px;background:#c89b3e;color:#2a1e08"><svg width="14" height="14"><circle cx="7" cy="7" r="6" fill="none" stroke="#2a1e08" stroke-width="1.2"/><path d="M4 5.5H10L7 9.5Z" fill="#2a1e08"/></svg>vocal</div>
<div class="a" style="left:1435px;top:817.5px;width:130px;height:15.6px;background:#313131"></div>
<div class="h" style="left:1435px;width:130px;top:836.6px;height:20.3px;background:#b9dfe9;color:#111;padding-left:39px;font-weight:700"><svg width="14" height="14" style="left:3px"><circle cx="7" cy="7" r="6" fill="none" stroke="#111" stroke-width="1.2"/><path d="M5.5 4V10L10 7Z" fill="#111"/></svg>Main</div>
<div class="a" style="left:1435px;top:864px;width:17px;height:15px;background:#f0b060;border:1px solid #222"><svg width="15" height="13"><path d="M3 5V9M5 3V11M7 1.5V12M9 3V11M11 5V9" stroke="#222" stroke-width="1"/></svg></div>
<div class="a" style="left:1456px;top:864px;width:45px;height:15px;background:#222;border:1px solid #111;overflow:hidden"><div class="a" style="left:0;top:0;width:17px;height:15px;background:#2f6f80"></div><div class="a" style="left:5px;top:0;font-size:12px;line-height:14px;color:#bbb">1.00x</div></div>
<div class="a" style="left:1524px;top:864px;width:18px;height:15px;background:#1e1e1e;border:1px solid #111;color:#bbb;font-size:12px;line-height:13px;text-align:center">H</div>
<div class="a" style="left:1545px;top:864px;width:18px;height:15px;background:#f0b060;border:1px solid #111;color:#222;font-size:12px;line-height:13px;text-align:center">W</div>
</div></body></html>
